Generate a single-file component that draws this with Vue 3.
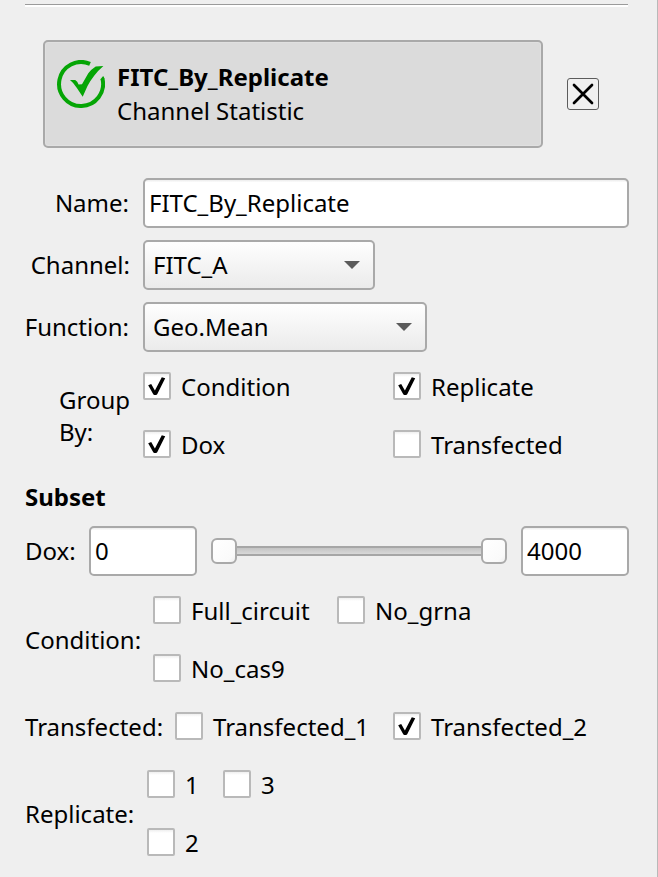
<script setup>
import { h, reactive, ref } from 'vue'

const name = ref('FITC_By_Replicate')
const doxMin = ref('0')
const doxMax = ref('4000')

const groupBy = reactive([
  { label: 'Condition', on: true },
  { label: 'Replicate', on: true },
  { label: 'Dox', on: true },
  { label: 'Transfected', on: false },
])
const conditions = reactive([
  { label: 'Full_circuit', on: false },
  { label: 'No_grna', on: false },
  { label: 'No_cas9', on: false },
])
const transfected = reactive([
  { label: 'Transfected_1', on: false },
  { label: 'Transfected_2', on: true },
])
const replicates = reactive([
  { label: '1', on: false },
  { label: '3', on: false },
  { label: '2', on: false },
])

const CheckItem = (props) =>
  h('div', { class: 'check', onClick: () => (props.item.on = !props.item.on) }, [
    h('span', { class: 'check-box' }, [
      props.item.on
        ? h('svg', { viewBox: '0 0 28 28', width: 28, height: 28 }, [
            h('path', { d: 'M5.2 13.2L8.2 12L11.9 18.6L18.8 5.2L22.2 6.2L14.2 22.2Q12.4 23.8 10.4 22.4Z' }),
          ])
        : null,
    ]),
    h('span', { class: 'check-text' }, props.item.label),
  ])
CheckItem.props = ['item']
</script>

<template>
  <main class="panel">
    <div class="rule"></div>

    <header class="head">
      <div class="card">
        <svg class="status" viewBox="0 0 48 48" width="48" height="48">
          <path d="M33 3.9A22 22 0 1 0 45.4 18.6" fill="none" stroke="#05a505" stroke-width="4" />
          <path d="M45.6 16.4L46.9 16.4L47.3 19L43.8 19.8L43.6 19.2Z" fill="#05a505" />
          <path d="M13 20L18.2 20Q20.5 21.5 21.6 24.4L25 24.2L31.3 13.2Q34.5 9 38.7 6.4L46.4 6Q41 10.5 37 16Q33 21 30.5 26L25.7 36.8L19.7 27.7Q16.8 23 13 20Z" fill="#05a505" />
        </svg>
        <div class="card-text">
          <strong>FITC_By_Replicate</strong>
          <span>Channel Statistic</span>
        </div>
      </div>
      <button class="close" aria-label="Close">
        <svg viewBox="0 0 30 30" width="30" height="30">
          <path d="M6 6L24 24M24 6L6 24" stroke="#000" stroke-width="2.7" stroke-linecap="round" />
        </svg>
      </button>
    </header>

    <section class="form">
      <label class="tight">Name:</label>
      <input v-model="name" class="field" />
      <label>Channel:</label>
      <div class="combo channel"><span>FITC_A</span><i class="arrow"></i></div>
      <label class="tight">Function:</label>
      <div class="combo function"><span>Geo.Mean</span><i class="arrow"></i></div>
    </section>

    <section class="group">
      <div class="group-label">Group<br />By:</div>
      <div class="group-grid">
        <CheckItem v-for="g in groupBy" :key="g.label" :item="g" />
      </div>
    </section>

    <h2>Subset</h2>

    <section class="range">
      <span class="range-label">Dox:</span>
      <input v-model="doxMin" class="field small" />
      <div class="slider">
        <i class="handle"></i>
        <i class="groove"></i>
        <i class="handle"></i>
      </div>
      <input v-model="doxMax" class="field small" />
    </section>

    <section class="subset condition">
      <span class="subset-label">Condition:</span>
      <div class="subset-grid">
        <CheckItem v-for="c in conditions" :key="c.label" :item="c" />
      </div>
    </section>

    <section class="subset transfected">
      <span class="subset-label">Transfected:</span>
      <div class="subset-grid">
        <CheckItem v-for="t in transfected" :key="t.label" :item="t" />
      </div>
    </section>

    <section class="subset replicate">
      <span class="subset-label">Replicate:</span>
      <div class="subset-grid">
        <CheckItem v-for="r in replicates" :key="r.label" :item="r" />
      </div>
    </section>
  </main>
</template>

<style>
body {
  background: #efefef;
  overflow: hidden;
}
</style>

<style scoped>
.panel {
  box-sizing: border-box;
  width: 658px;
  height: 877px;
  padding: 4px 28px 0 25px;
  border-right: 1px solid #b9b9b9;
  background: #efefef;
  color: #000;
  font: 24px/32px "Noto Sans", sans-serif;
  white-space: nowrap;
}
.rule {
  width: 603px;
  height: 1px;
  background: #9b9b9b;
  border-bottom: 2px solid #fff;
}
.head {
  display: flex;
  align-items: center;
  gap: 24px;
  margin: 33px 0 30px 18px;
}
.card {
  box-sizing: border-box;
  display: flex;
  width: 500px;
  height: 108px;
  padding: 18px 12px;
  gap: 12px;
  border: 2px solid #a9a9a9;
  border-radius: 5px;
  background: #dbdbdb;
  box-shadow: inset 0 0 0 1px #e0e0e0;
}
.status {
  flex: none;
}
.card-text {
  display: flex;
  flex-direction: column;
  line-height: 34px;
}
.close {
  box-sizing: border-box;
  width: 32px;
  height: 32px;
  padding: 0;
  border: 1px solid #5c5c5c;
  border-radius: 3px;
  background: #f0f0f0;
}
.close svg {
  display: block;
}
.form {
  display: grid;
  grid-template-columns: 105px 486px;
  column-gap: 13px;
  row-gap: 12px;
  align-items: center;
}
.form label {
  justify-self: end;
}
.form .tight {
  padding-right: 1px;
}
.field {
  box-sizing: border-box;
  display: block;
  width: 100%;
  height: 50px;
  margin: 0;
  padding: 0 4px 2px;
  border: 2px solid #a9a9a9;
  border-radius: 5px;
  outline: none;
  background: linear-gradient(#f0f0f0 0 1px, #fff 2px);
  color: #000;
  font: inherit;
}
.combo {
  box-sizing: border-box;
  display: flex;
  align-items: center;
  justify-content: space-between;
  height: 50px;
  padding: 0 13px 0 8px;
  border: 2px solid #a9a9a9;
  border-radius: 5px;
  background: linear-gradient(#fefefe, #ebebeb);
}
.channel {
  width: 232px;
}
.function {
  width: 284px;
}
.arrow {
  width: 16px;
  height: 8px;
  background: #5b5b5b;
  clip-path: polygon(0 0, 100% 0, 50% 100%);
}
.group {
  display: flex;
  margin-top: 20px;
}
.group-label {
  width: 84px;
  padding: 12px 0 0 34px;
}
.group-grid {
  display: grid;
  grid-template-columns: 250px 200px;
  row-gap: 30px;
  align-content: start;
  height: 86px;
}
:deep(.check) {
  display: flex;
  align-items: center;
  height: 28px;
}
:deep(.check-box) {
  box-sizing: border-box;
  flex: none;
  width: 28px;
  height: 28px;
  margin-right: 10px;
  border: 2px solid #b9b9b9;
  border-radius: 2px;
  background: linear-gradient(#efefef, #fff 3px);
}
:deep(.check-box svg) {
  display: block;
  margin: -2px;
}
:deep(.check-text) {
  padding-top: 2px;
}
h2 {
  margin: 23px 0 0;
  font: inherit;
  font-weight: 700;
}
.range {
  display: flex;
  align-items: center;
  height: 50px;
  margin-top: 13px;
}
.range-label {
  width: 64px;
}
.small {
  width: 108px;
}
.slider {
  display: flex;
  align-items: center;
  width: 296px;
  margin: 0 14px;
}
.handle {
  box-sizing: border-box;
  flex: none;
  width: 26px;
  height: 26px;
  border: 2px solid #a9a9a9;
  border-radius: 6px;
  background: linear-gradient(135deg, #fff, #fafafa 80%, #efefef);
}
.groove {
  box-sizing: border-box;
  flex: 1;
  height: 10px;
  border: solid #a6a6a6;
  border-width: 2px 0;
  background: linear-gradient(#c4c4c4, #d8d8d8);
}
.subset {
  display: flex;
  align-items: center;
}
.subset-label {
  padding-top: 2px;
  line-height: 26px;
}
.subset-grid {
  display: grid;
  row-gap: 30px;
}
.condition {
  margin-top: 20px;
}
.condition .subset-label {
  width: 128px;
}
.condition .subset-grid {
  grid-template-columns: 184px 200px;
}
.transfected {
  margin-top: 30px;
}
.transfected .subset-label {
  width: 150px;
}
.transfected .subset-grid {
  grid-template-columns: 218px 220px;
}
.replicate {
  margin-top: 30px;
}
.replicate .subset-label {
  width: 122px;
}
.replicate .subset-grid {
  grid-template-columns: 76px 100px;
}
</style>
